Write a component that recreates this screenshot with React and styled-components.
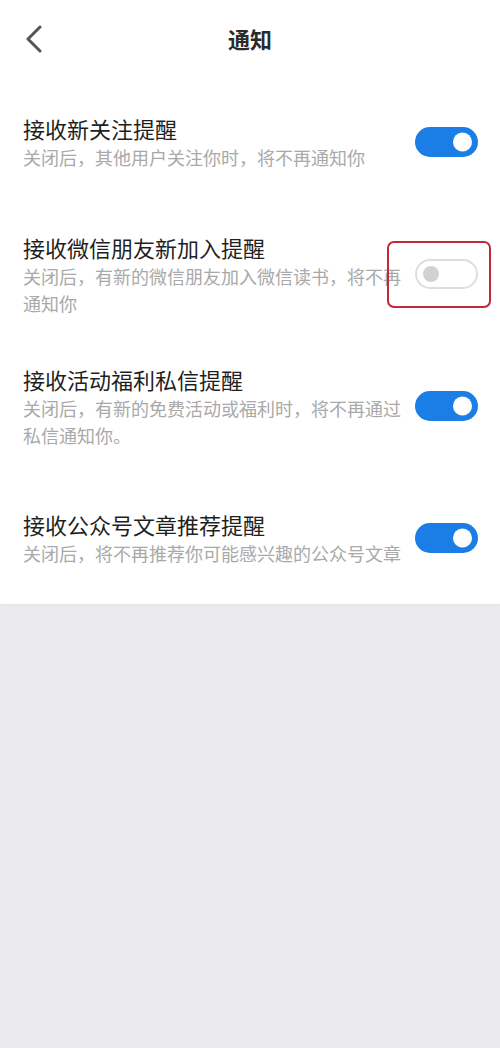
import React, { useState } from "react";
import styled, { createGlobalStyle } from "styled-components";

const Global = createGlobalStyle`
  html, body {
    margin: 0;
    padding: 0;
    background: #ebebed;
  }
  body {
    font-family: "Noto Sans CJK SC", "Noto Sans", sans-serif;
    -webkit-font-smoothing: antialiased;
  }
`;

const Page = styled.div`
  width: 500px;
  min-height: 1048px;
  background: #ebebed;
`;

const Sheet = styled.div`
  background: #ffffff;
  box-shadow: 0 1px 2px rgba(0, 0, 0, 0.04);
`;

const Header = styled.header`
  position: relative;
  height: 76px;
  display: flex;
  align-items: center;
  justify-content: center;
`;

const BackButton = styled.button`
  position: absolute;
  left: 18px;
  top: 22px;
  width: 32px;
  height: 34px;
  padding: 0;
  border: none;
  background: transparent;
  display: flex;
  align-items: center;
  justify-content: center;
  cursor: pointer;
`;

const Title = styled.h1`
  margin: 0;
  font-size: 22px;
  font-weight: 700;
  color: #2b2b2b;
  letter-spacing: 0;
`;

const Row = styled.div`
  height: 132px;
  display: flex;
  align-items: center;
  padding: 0 22px 0 23px;
  gap: 12px;
  box-sizing: border-box;
`;

const TextCol = styled.div`
  flex: 1;
  min-width: 0;
  display: flex;
  flex-direction: column;
`;

const RowTitle = styled.div`
  font-size: 22px;
  line-height: 31px;
  color: #1f1f1f;
`;

const RowDesc = styled.div`
  font-size: 18px;
  line-height: 27px;
  color: #a9a9a9;
`;

const ToggleWrap = styled.div`
  position: relative;
  flex: none;
  display: flex;
`;

const Track = styled.button`
  width: 63px;
  height: 30px;
  padding: 0;
  border-radius: 15px;
  box-sizing: border-box;
  border: ${(p) => (p.$on ? "none" : "2px solid #dedede")};
  background: ${(p) => (p.$on ? "#1b7ee6" : "#ffffff")};
  position: relative;
  cursor: pointer;
`;

const Knob = styled.span`
  position: absolute;
  top: 50%;
  transform: translateY(-50%);
  border-radius: 50%;
  ${(p) =>
    p.$on
      ? `
    right: 6px;
    width: 19px;
    height: 19px;
    background: #ffffff;
  `
      : `
    left: 6px;
    width: 16px;
    height: 16px;
    background: #d2d2d2;
  `}
`;

const Highlight = styled.span`
  position: absolute;
  left: -28px;
  right: -13px;
  top: -18px;
  bottom: -19px;
  border: 2.5px solid #c3283a;
  border-radius: 7px;
  pointer-events: none;
`;

const items = [
  {
    title: "接收新关注提醒",
    desc: "关闭后，其他用户关注你时，将不再通知你",
    on: true,
  },
  {
    title: "接收微信朋友新加入提醒",
    desc: "关闭后，有新的微信朋友加入微信读书，将不再通知你",
    on: false,
    marked: true,
  },
  {
    title: "接收活动福利私信提醒",
    desc: "关闭后，有新的免费活动或福利时，将不再通过私信通知你。",
    on: true,
  },
  {
    title: "接收公众号文章推荐提醒",
    desc: "关闭后，将不再推荐你可能感兴趣的公众号文章",
    on: true,
  },
];

function Switch({ on, marked, onToggle }) {
  return (
    <ToggleWrap>
      <Track $on={on} onClick={onToggle} aria-pressed={on}>
        <Knob $on={on} />
      </Track>
      {marked && <Highlight />}
    </ToggleWrap>
  );
}

export default function App() {
  const [state, setState] = useState(items.map((i) => i.on));

  return (
    <Page>
      <Global />
      <Sheet>
        <Header>
          <BackButton aria-label="返回">
            <svg width="20" height="28" viewBox="0 0 20 28">
              <polyline
                points="16,2 4,14 16,26"
                fill="none"
                stroke="#555555"
                strokeWidth="3"
                strokeLinecap="round"
                strokeLinejoin="round"
              />
            </svg>
          </BackButton>
          <Title>通知</Title>
        </Header>
        {items.map((item, i) => (
          <Row key={item.title}>
            <TextCol>
              <RowTitle>{item.title}</RowTitle>
              <RowDesc>{item.desc}</RowDesc>
            </TextCol>
            <Switch
              on={state[i]}
              marked={item.marked}
              onToggle={() =>
                setState((s) => s.map((v, j) => (j === i ? !v : v)))
              }
            />
          </Row>
        ))}
      </Sheet>
    </Page>
  );
}
